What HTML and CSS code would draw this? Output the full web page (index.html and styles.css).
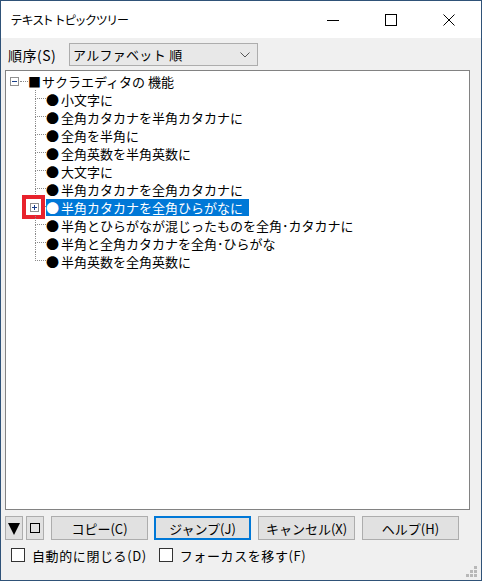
FILE: index.html
```html
<!DOCTYPE html>
<html lang="ja">
<head>
<meta charset="utf-8">
<title>テキスト トピックツリー</title>
<link rel="stylesheet" href="styles.css">
</head>
<body>
<div class="window">
  <div class="titlebar">
    <div class="title">テキスト トピックツリー</div>
    <div class="controls">
      <div class="ctl"><svg width="14" height="14" viewBox="0 0 14 14"><path d="M1 7.5H13" stroke="#000" stroke-width="1"/></svg></div>
      <div class="ctl"><svg width="14" height="14" viewBox="0 0 14 14"><rect x="1.5" y="1.5" width="11" height="11" fill="none" stroke="#000" stroke-width="1"/></svg></div>
      <div class="ctl close"><svg width="14" height="14" viewBox="0 0 14 14"><path d="M1.5 1.5L12.5 12.5M12.5 1.5L1.5 12.5" stroke="#000" stroke-width="1"/></svg></div>
    </div>
  </div>
  <div class="content">
    <div class="order">
      <span class="order-label">順序(S)</span>
      <div class="combo">
        <span class="combo-text">アルファベット 順</span>
        <svg class="chev" width="10" height="6" viewBox="0 0 10 6"><path d="M0.5 0.5L5 5L9.5 0.5" fill="none" stroke="#555" stroke-width="1"/></svg>
      </div>
    </div>
    <div class="tree">
      <div class="row root">
        <span class="exp"><svg width="9" height="9" viewBox="0 0 9 9"><rect x="0.5" y="0.5" width="8" height="8" fill="#fff" stroke="#919191"/><path d="M2 4.5H7" stroke="#1a3f8a"/></svg></span>
        <span class="hdots"></span>
        <span class="sq">■</span>
        <span class="label">サクラエディタの 機能</span>
      </div>
      <div class="children">
        <div class="row child"><span class="conn"><i class="up"></i><i class="down"></i></span><span class="label"><span class="dot">●</span>小文字に</span></div>
        <div class="row child"><span class="conn"><i class="up"></i><i class="down"></i></span><span class="label"><span class="dot">●</span>全角カタカナを半角カタカナに</span></div>
        <div class="row child"><span class="conn"><i class="up"></i><i class="down"></i></span><span class="label"><span class="dot">●</span>全角を半角に</span></div>
        <div class="row child"><span class="conn"><i class="up"></i><i class="down"></i></span><span class="label"><span class="dot">●</span>全角英数を半角英数に</span></div>
        <div class="row child"><span class="conn"><i class="up"></i><i class="down"></i></span><span class="label"><span class="dot">●</span>大文字に</span></div>
        <div class="row child"><span class="conn"><i class="up"></i><i class="down"></i></span><span class="label"><span class="dot">●</span>半角カタカナを全角カタカナに</span></div>
        <div class="row child sel">
          <span class="conn"><i class="up"></i><i class="down"></i>
            <span class="mark"></span>
            <span class="exp-plus"><svg width="9" height="9" viewBox="0 0 9 9"><rect x="0.5" y="0.5" width="8" height="8" fill="#fff" stroke="#919191"/><path d="M2 4.5H7M4.5 2V7" stroke="#1a3f8a"/></svg></span>
          </span>
          <span class="label"><span class="dot">●</span>半角カタカナを全角ひらがなに</span>
        </div>
        <div class="row child"><span class="conn"><i class="up"></i><i class="down"></i></span><span class="label"><span class="dot">●</span>半角とひらがなが混じったものを全角･カタカナに</span></div>
        <div class="row child"><span class="conn"><i class="up"></i><i class="down"></i></span><span class="label"><span class="dot">●</span>半角と全角カタカナを全角･ひらがな</span></div>
        <div class="row child last"><span class="conn"><i class="up"></i><i class="down"></i></span><span class="label"><span class="dot">●</span>半角英数を全角英数に</span></div>
      </div>
    </div>
    <div class="buttons">
      <div class="btn small"><svg width="12" height="13" viewBox="0 0 12 13"><path d="M0 1H12L6 13Z" fill="#000"/></svg></div>
      <div class="btn small gap1"><span class="box"></span></div>
      <div class="btn wide gap2">コピー(C)</div>
      <div class="btn wide focus gap3">ジャンプ(J)</div>
      <div class="btn wide gap4">キャンセル(X)</div>
      <div class="btn wide gap4">ヘルプ(H)</div>
    </div>
    <div class="checks">
      <label class="check"><span class="cb"></span>自動的に閉じる(D)</label>
      <label class="check second"><span class="cb"></span>フォーカスを移す(F)</label>
    </div>
    <svg class="grip" width="12" height="12" viewBox="0 0 12 12">
      <g fill="#b8b8b8">
        <rect x="8" y="0" width="3" height="3"/>
        <rect x="4" y="4" width="3" height="3"/><rect x="8" y="4" width="3" height="3"/>
        <rect x="0" y="8" width="3" height="3"/><rect x="4" y="8" width="3" height="3"/><rect x="8" y="8" width="3" height="3"/>
      </g>
    </svg>
  </div>
</div>
</body>
</html>
```

FILE: styles.css
```css
* { box-sizing: border-box; }
html, body { margin: 0; padding: 0; }
body {
  font-family: "Noto Sans CJK JP", "Noto Sans", sans-serif;
  font-size: 13px;
  color: #000;
  background: #f0f0f0;
}
.window {
  width: 482px;
  height: 581px;
  border: 1px solid #2f5278;
  display: flex;
  flex-direction: column;
  background: #f0f0f0;
}
.titlebar {
  height: 37px;
  background: #fff;
  display: flex;
  align-items: center;
  flex: none;
}
.title {
  font-size: 12px;
  padding-left: 10px;
  font-feature-settings: "palt";
  flex: 1;
}
.controls { display: flex; height: 100%; padding-right: 3px; }
.ctl {
  width: 58px;
  display: flex;
  align-items: center;
  justify-content: center;
}
.content {
  flex: 1;
  display: flex;
  flex-direction: column;
  position: relative;
}
.order {
  display: flex;
  align-items: center;
  margin-top: 5px;
  height: 23px;
}
.order-label {
  width: 68px;
  padding-left: 7px;
  font-size: 14px;
  letter-spacing: 0.5px;
}
.combo {
  width: 189px;
  height: 23px;
  border: 1px solid #adadad;
  background: #e8e8e8;
  display: flex;
  align-items: center;
  padding-left: 3px;
  padding-right: 7px;
}
.combo-text { flex: 1; letter-spacing: 0.3px; }
.tree {
  margin-top: 4px;
  margin-left: 4px;
  width: 465px;
  height: 440px;
  background: #fff;
  border: 1px solid #828282;
  padding-top: 1px;
}
.row {
  height: 18px;
  display: flex;
  align-items: center;
  white-space: nowrap;
}
.root .exp {
  width: 9px;
  height: 9px;
  margin-left: 4px;
  display: flex;
}
.hdots {
  width: 8px;
  margin-left: 1px;
  border-top: 1px dotted #8a8a8a;
}
.sq {
  font-size: 13px;
  width: 14px;
  line-height: 17px;
}
.label { line-height: 17px; }
.conn {
  width: 11px;
  height: 18px;
  margin-left: 29px;
  display: flex;
  flex-direction: column;
  position: relative;
}
.conn i {
  display: block;
  height: 9px;
  border-left: 1px dotted #8a8a8a;
}
.conn .up { border-bottom: 1px dotted #8a8a8a; }
.last .conn .down { border-left: none; }
.dot {
  display: inline-block;
  width: 15px;
}
.sel .label {
  background: #0078d7;
  color: #fff;
  padding-right: 6px;
}
.exp-plus {
  position: absolute;
  left: -5px;
  top: 5px;
  width: 9px;
  height: 9px;
  display: flex;
}
.mark {
  position: absolute;
  left: -13px;
  top: -3px;
  width: 23px;
  height: 24px;
  border: 4px solid #e8222c;
  background: #fff;
}
.buttons {
  display: flex;
  margin-top: 6px;
  margin-left: 4px;
  height: 24px;
}
.btn {
  height: 24px;
  background: #e1e1e1;
  border: 1px solid #adadad;
  display: flex;
  align-items: center;
  justify-content: center;
  font-size: 13px;
}
.btn.small { width: 18px; }
.btn.wide { width: 97px; }
.gap1 { margin-left: 3px; }
.gap2 { margin-left: 7px; }
.gap3 { margin-left: 6px; }
.gap4 { margin-left: 7px; }
.btn.focus { border: 2px solid #0078d7; }
.box {
  width: 10px;
  height: 10px;
  border: 1.5px solid #000;
}
.checks {
  display: flex;
  align-items: center;
  margin-top: 6px;
  height: 18px;
}
.check {
  display: flex;
  align-items: center;
  margin-left: 10px;
  letter-spacing: 0.6px;
}
.check.second { margin-left: 12px; }
.cb {
  width: 14px;
  height: 14px;
  border: 1px solid #333;
  background: #fff;
  margin-right: 7px;
}
.grip {
  position: absolute;
  right: 3px;
  bottom: 2px;
}
```
